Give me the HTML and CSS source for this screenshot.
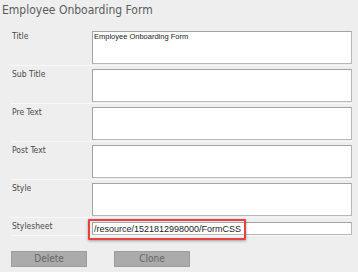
FILE: index.html
```html
<!DOCTYPE html>
<html lang="en">
<head>
  <meta charset="UTF-8" />
  <title>Employee Onboarding Form</title>
  <link rel="stylesheet" href="styles.css">
</head>
<body>
  <h1 class="form-title">Employee Onboarding Form</h1>

  <div class="form">
    <div class="row">
      <label class="label">Title</label>
      <div class="field"><textarea class="box">Employee Onboarding Form</textarea></div>
    </div>
    <div class="row">
      <label class="label">Sub Title</label>
      <div class="field"><textarea class="box"></textarea></div>
    </div>
    <div class="row">
      <label class="label">Pre Text</label>
      <div class="field"><textarea class="box"></textarea></div>
    </div>
    <div class="row">
      <label class="label">Post Text</label>
      <div class="field"><textarea class="box"></textarea></div>
    </div>
    <div class="row">
      <label class="label">Style</label>
      <div class="field"><textarea class="box"></textarea></div>
    </div>
    <div class="row row-short">
      <label class="label">Stylesheet</label>
      <div class="field">
        <input class="line" type="text" value="/resource/1521812998000/FormCSS">
        <span class="mark"></span>
      </div>
    </div>
  </div>

  <div class="actions">
    <button class="grey">Delete</button>
    <button class="grey">Clone</button>
  </div>
</body>
</html>
```

FILE: styles.css
```css
body {
  font-family: "DejaVu Sans Condensed", "DejaVu Sans", sans-serif;
  background: #eeeeee;
  margin: 0;
  padding: 0;
  overflow: hidden;
}

.form-title {
  font-size: 12px;
  line-height: 14px;
  font-weight: normal;
  color: #5c5c5c;
  margin: 0;
  padding: 3px 0 0 2px;
}

.form {
  width: 341px;
  margin: 11px 0 0 11px;
}

.row {
  display: grid;
  grid-template-columns: 81px 260px;
  padding: 3px 0 1px 0;
  border-bottom: 1px solid #f7f7f7;
}

.row-short {
  padding: 4px 0 0 0;
}

.label {
  font-size: 8.5px;
  line-height: 10px;
  color: #4a4a4a;
  padding: 0 0 0 1px;
}

.row-short .label {
  margin-top: -1px;
}

.field {
  position: relative;
}

.box {
  display: block;
  box-sizing: border-box;
  width: 260px;
  height: 33px;
  margin: 0;
  padding: 0 1px;
  resize: none;
  overflow: hidden;
  background: #fff;
  border: 1px solid #a4a4a4;
  border-right-color: #b8b8b8;
  border-bottom-color: #b8b8b8;
  font-family: "Liberation Sans", Arial, sans-serif;
  font-size: 7.5px;
  line-height: 10px;
  color: #1a1a24;
}

.line {
  display: block;
  box-sizing: border-box;
  width: 260px;
  height: 13px;
  margin: 0;
  padding: 0 1px;
  background: #fff;
  border: 1px solid #a4a4a4;
  border-right-color: #b8b8b8;
  border-bottom-color: #b8b8b8;
  font-family: "Liberation Sans", Arial, sans-serif;
  font-size: 9px;
  color: #222;
  outline: none;
}

/* red call-out drawn over the stylesheet value */
.mark {
  position: absolute;
  left: -4px;
  top: -3px;
  width: 158px;
  height: 21px;
  box-sizing: border-box;
  border: 2px solid #e8423f;
  border-radius: 1px;
  box-shadow: 0 1px 3px rgba(0,0,0,0.35);
}

.actions {
  display: flex;
  gap: 27px;
  margin: 15px 0 0 11px;
}

button {
  font-family: "DejaVu Sans Condensed", "DejaVu Sans", sans-serif;
  cursor: pointer;
}

.grey {
  width: 76px;
  height: 16px;
  padding: 0;
  font-size: 10px;
  line-height: 14px;
  color: #666666;
  background: #ababab;
  border: 1px solid #9d9d9d;
  border-radius: 0;
}
```
